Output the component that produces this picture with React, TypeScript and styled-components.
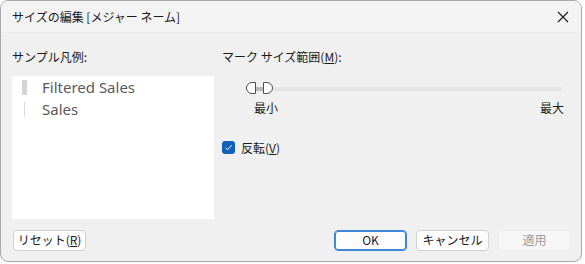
import styled, { createGlobalStyle } from "styled-components";

const GlobalStyle = createGlobalStyle`
  html, body {
    margin: 0;
    padding: 0;
    background: #ffffff;
    width: 585px;
    height: 264px;
    overflow: hidden;
  }
  body {
    font-family: "Noto Sans CJK JP", "Noto Sans", sans-serif;
    font-size: 12px;
    color: #1a1a1a;
  }
`;

const Window = styled.div`
  width: 582px;
  height: 262px;
  box-sizing: border-box;
  border: 1px solid #a9a9a9;
  border-radius: 8px;
  background: #f0f0f0;
  display: flex;
  flex-direction: column;
  overflow: hidden;
`;

const TitleBar = styled.div`
  height: 31px;
  flex: none;
  display: flex;
  align-items: center;
  justify-content: space-between;
  padding: 0 8px 0 11px;
  background: #f3f3f3;
  border-bottom: 1px solid #ebebeb;
`;

const TitleText = styled.span`
  font-size: 12px;
  color: #1a1a1a;
`;

const CloseButton = styled.div`
  width: 20px;
  height: 20px;
  display: flex;
  align-items: center;
  justify-content: center;
`;

const Body = styled.div`
  flex: 1;
  display: grid;
  grid-template-columns: 202px 1fr;
  column-gap: 7px;
  padding: 15px 11px 0 11px;
`;

const Label = styled.div`
  font-size: 12px;
  height: 17px;
  line-height: 17px;
  color: #1a1a1a;
`;

const Mnemonic = styled.span`
  text-decoration: underline;
`;

const LegendBox = styled.div`
  margin-top: 11px;
  height: 143px;
  background: #ffffff;
  padding-top: 0;
  box-sizing: border-box;
`;

const LegendRow = styled.div`
  display: flex;
  align-items: center;
  height: 22px;
  padding-left: 10px;
  font-family: "Noto Sans", sans-serif;
  font-size: 15px;
  color: #5a5a5a;
`;

const Swatch = styled.div<{ $w: number }>`
  width: ${(p) => p.$w}px;
  height: 15px;
  margin-left: ${(p) => (p.$w > 2 ? 0 : 2)}px;
  margin-right: ${(p) => 20 - p.$w - (p.$w > 2 ? 0 : 2)}px;
  background: ${(p) => (p.$w > 2 ? "#d4d4d4" : "#d9d9d9")};
`;

const RightPane = styled.div`
  display: flex;
  flex-direction: column;
  padding-left: 1px;
`;

const SliderArea = styled.div`
  margin-top: 22px;
  padding-left: 24px;
  padding-right: 8px;
`;

const Track = styled.div`
  position: relative;
  height: 4px;
  background: #e4e4e4;
  border-radius: 2px;
`;

const Thumb = styled.div<{ $left: number; $flip?: boolean }>`
  position: absolute;
  top: -5px;
  left: ${(p) => p.$left}px;
  width: 10px;
  height: 12px;
  box-sizing: border-box;
  background: #ffffff;
  border: 1px solid #505050;
  border-radius: ${(p) => (p.$flip ? "0 6px 6px 0" : "6px 0 0 6px")};
`;

const RangeFill = styled.div`
  position: absolute;
  top: 0;
  left: 8px;
  width: 12px;
  height: 4px;
  background: #b8b8b8;
`;

const ScaleLabels = styled.div`
  display: flex;
  justify-content: space-between;
  margin-top: 8px;
  padding-left: 8px;
  margin-right: -2px;
  font-size: 12px;
`;

const CheckRow = styled.label`
  margin-top: 23px;
  display: flex;
  align-items: center;
  gap: 6px;
  font-size: 12px;
`;

const CheckBox = styled.div`
  width: 13px;
  height: 13px;
  border-radius: 3px;
  background: #0f62b8;
  display: flex;
  align-items: center;
  justify-content: center;
`;

const Footer = styled.div`
  display: flex;
  align-items: center;
  padding: 0 10px 10px 12px;
  height: 22px;
  margin-top: 10px;
`;

const Spacer = styled.div`
  flex: 1;
`;

const Button = styled.button<{ $primary?: boolean; $disabled?: boolean }>`
  width: 73px;
  height: 21px;
  margin-left: ${(p) => (p.$primary ? 0 : 9)}px;
  box-sizing: border-box;
  border-radius: 4px;
  font-family: "Noto Sans CJK JP", "Noto Sans", sans-serif;
  font-size: 12px;
  padding: 0;
  line-height: 1;
  background: ${(p) => (p.$disabled ? "#f6f6f6" : "#fdfdfd")};
  color: ${(p) => (p.$disabled ? "#9d9d9d" : "#1a1a1a")};
  border: 1px solid
    ${(p) => (p.$primary ? "#3f87d4" : p.$disabled ? "#efefef" : "#d0d0d0")};
  box-shadow: ${(p) => (p.$primary ? "inset 0 0 0 1px #3f87d4" : "none")};
  &:first-child {
    margin-left: 0;
  }
`;

export default function App() {
  return (
    <>
      <GlobalStyle />
      <Window>
        <TitleBar>
          <TitleText>サイズの編集 [メジャー ネーム]</TitleText>
          <CloseButton>
            <svg width="12" height="12" viewBox="0 0 12 12">
              <path d="M1 1 L11 11 M11 1 L1 11" stroke="#1a1a1a" strokeWidth="1.1" />
            </svg>
          </CloseButton>
        </TitleBar>
        <Body>
          <div>
            <Label>サンプル凡例:</Label>
            <LegendBox>
              <LegendRow>
                <Swatch $w={5} />
                Filtered Sales
              </LegendRow>
              <LegendRow>
                <Swatch $w={1} />
                Sales
              </LegendRow>
            </LegendBox>
          </div>
          <RightPane>
            <Label>
              マーク サイズ範囲(<Mnemonic>M</Mnemonic>):
            </Label>
            <SliderArea>
              <Track>
                <RangeFill />
                <Thumb $left={0} />
                <Thumb $left={17} $flip />
              </Track>
              <ScaleLabels>
                <span>最小</span>
                <span>最大</span>
              </ScaleLabels>
            </SliderArea>
            <CheckRow>
              <CheckBox>
                <svg width="9" height="9" viewBox="0 0 9 9">
                  <path d="M1.5 4.8 L3.6 6.8 L7.6 2.2" fill="none" stroke="#ffffff" strokeWidth="1" />
                </svg>
              </CheckBox>
              <span>
                反転(<Mnemonic>V</Mnemonic>)
              </span>
            </CheckRow>
          </RightPane>
        </Body>
        <Footer>
          <Button>
            リセット(<Mnemonic>R</Mnemonic>)
          </Button>
          <Spacer />
          <Button $primary>OK</Button>
          <Button>キャンセル</Button>
          <Button $disabled>適用</Button>
        </Footer>
      </Window>
    </>
  );
}
